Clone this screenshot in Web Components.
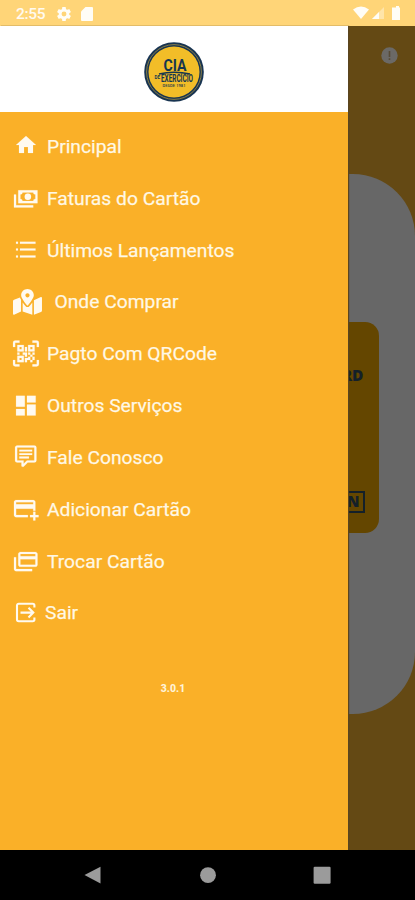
<!DOCTYPE html>
<html lang="pt-BR">
<head>
<meta charset="utf-8">
<title>CIA do Exercício</title>
<style>
html,body{margin:0;padding:0}
body{width:415px;height:900px;overflow:hidden;background:#000;font-family:Roboto,"Noto Sans",sans-serif}
</style>
</head>
<body>
<app-shell></app-shell>
<script>
const define = (name, html) => customElements.define(name, class extends HTMLElement {
  constructor() {
    super();
    const t = document.createElement('template');
    t.innerHTML = html;
    this.attachShadow({mode: 'open'}).append(t.content.cloneNode(true));
  }
});

define('status-bar', `
<style>
:host{display:flex;align-items:center;height:26px;box-sizing:border-box;background:#ffd578;color:#fffaf0;padding:1px 15px 0 16px;font-size:15.5px;font-weight:500}
svg{display:block;fill:#fffdf6}
.time{width:41px;letter-spacing:-.35px;padding-top:1px}
.left{display:flex;gap:10px;flex:1}
.right{display:flex;align-items:center}
</style>
<span class="time">2:55</span>
<div class="left">
<svg width="14" height="14" viewBox="2 2 20 20"><path fill-rule="evenodd" d="M19.43 12.98c.04-.32.07-.64.07-.98s-.03-.66-.07-.98l2.11-1.65c.19-.15.24-.42.12-.64l-2-3.46c-.12-.22-.39-.3-.61-.22l-2.49 1c-.52-.4-1.08-.73-1.69-.98l-.38-2.65A.49.49 0 0 0 14 2h-4c-.25 0-.46.18-.49.42l-.38 2.65c-.61.25-1.17.59-1.69.98l-2.49-1c-.23-.09-.49 0-.61.22l-2 3.46c-.13.22-.07.49.12.64l2.11 1.65c-.04.32-.07.65-.07.98s.03.66.07.98l-2.11 1.65c-.19.15-.24.42-.12.64l2 3.46c.12.22.39.3.61.22l2.49-1c.52.4 1.08.73 1.69.98l.38 2.65c.03.24.24.42.49.42h4c.25 0 .46-.18.49-.42l.38-2.65c.61-.25 1.17-.59 1.69-.98l2.49 1c.23.09.49 0 .61-.22l2-3.46c.12-.22.07-.49-.12-.64l-2.11-1.65zM12 15.5a3.5 3.5 0 1 1 0-7 3.5 3.5 0 0 1 0 7z"/></svg>
<svg width="12" height="14" viewBox="0 0 12 14"><path d="M4.500 0H11a1 1 0 0 1 1 1v12a1 1 0 0 1-1 1H1a1 1 0 0 1-1-1V4.500z"/></svg>
</div>
<div class="right">
<svg width="47" height="15" viewBox="0 0 47 15"><path d="M0 3.500Q8-2.500 16 3.500L8 13z"/><path opacity=".4" d="M31 1v12H19z"/><path d="M26 6v7h-7z"/><path d="M41 1.500h2V0h3v1.500h1.500V14H39V1.500z"/></svg>
</div>`);

define('brand-logo', `
<style>:host{display:block;width:60px;height:60px}svg{display:block;overflow:visible}text{font-family:Roboto,sans-serif;fill:#16364f}</style>
<svg width="60" height="60" viewBox="0 0 60 60">
<circle cx="30" cy="30" r="29.800" fill="#183451"/><circle cx="30" cy="30" r="27.400" fill="none" stroke="#a69246" stroke-width=".8"/><circle cx="30" cy="30" r="25.500" fill="#f2bd28"/>
<text transform="translate(19.500 29) scale(1 1.350)" font-size="12.800" font-weight="700" textLength="23" lengthAdjust="spacingAndGlyphs">CIA</text>
<path d="M15 32Q30 28.500 46 32" fill="none" stroke="#16364f" stroke-width="1.300"/>
<text x="10.500" y="36.500" font-size="4.500" font-weight="700">DE</text>
<text x="17" y="39.700" font-size="10.500" font-weight="700" textLength="32" lengthAdjust="spacingAndGlyphs">EXERCÍCIO</text>
<text x="18.500" y="45" font-size="4" font-weight="500" textLength="23">DESDE 1981</text>
</svg>`);

const mdi = (x, y, s, d) => `<path fill-rule="evenodd" transform="translate(${x} ${y}) scale(${s})" d="${d}"/>`;
const icons = {
  home: mdi(3, 2, 1, 'M10 20v-6h4v6h5v-8h3L12 3 2 12h3v8z'),
  cash: mdi(1.9, .9, 1.07, 'M5,6H23V18H5V6M14,9A3,3 0 0,1 17,12A3,3 0 0,1 14,15A3,3 0 0,1 11,12A3,3 0 0,1 14,9M9,8A2,2 0 0,1 7,10V14A2,2 0 0,1 9,16H19A2,2 0 0,1 21,14V10A2,2 0 0,1 19,8H9M1,10H3V20H19V22H1V10Z'),
  list: '<path d="M5 6.700h2v2H5zm4 0h15.500v2H9zM5 13.600h2v2H5zm4 0h15.500v2H9zM5 20.500h2v2H5zm4 0h15.500v2H9z"/>',
  map: mdi(2, 2, .0503, 'M288 0c-69.59 0-126 56.41-126 126 0 56.26 82.35 158.8 113.9 196.02 6.39 7.54 17.82 7.54 24.2 0C331.65 284.8 414 182.26 414 126 414 56.41 357.59 0 288 0zm0 168c-23.2 0-42-18.8-42-42s18.8-42 42-42 42 18.8 42 42-18.8 42-42 42zM20.12 215.95A32.006 32.006 0 0 0 0 245.66v250.32c0 11.32 11.43 19.06 21.94 14.86L160 448V214.92c-8.84-15.98-16.07-31.54-21.25-46.42L20.12 215.95zM288 359.67c-14.07 0-27.38-6.18-36.51-16.96-19.66-23.2-40.57-49.62-59.49-76.72v182l192 64V266c-18.92 27.09-39.82 53.52-59.49 76.72-9.13 10.77-22.44 16.95-36.51 16.95zm266.06-198.51L416 224v288l139.88-55.95A31.996 31.996 0 0 0 576 426.34V176.02c0-11.32-11.43-19.06-21.94-14.86z'),
  qr: mdi(2, 1.6, 1.08, 'M4,4H10V10H4V4M20,4V10H14V4H20M14,15H16V13H14V11H16V13H18V11H20V13H18V15H20V18H18V20H16V18H13V20H11V16H14V15M16,15V18H18V15H16M4,20V14H10V20H4M6,6V8H8V6H6M16,6V8H18V6H16M6,16V18H8V16H6M4,11H6V13H4V11M9,11H13V15H11V13H9V11M11,6H13V10H11V6M2,2V6H0V2A2,2 0 0,1 2,0H6V2H2M22,0A2,2 0 0,1 24,2V6H22V2H18V0H22M2,18V22H6V24H2A2,2 0 0,1 0,22V18H2M22,22V18H24V22A2,2 0 0,1 22,24H18V22H22Z'),
  dash: mdi(1.8, 1.6, 1.09, 'M3 13h8V3H3v10zm0 8h8v-6H3v6zm10 0h8V11h-8v10zm0-18v6h8V3h-8z'),
  chat: mdi(1.9, 1.3, 1.07, 'M9,22A1,1 0 0,1 8,21V18H4A2,2 0 0,1 2,16V4C2,2.89 2.9,2 4,2H20A2,2 0 0,1 22,4V16A2,2 0 0,1 20,18H13.9L10.2,21.71C10,21.9 9.75,22 9.5,22V22H9M10,16V19.08L13.08,16H20V4H4V16H10M6,6H18V7.700H6V6M6,9.200H18V10.900H6V9.200M6,12.400H15V14.100H6V12.400Z'),
  add: mdi(1.9, 1.8, 1.07, 'M21 18H24V20H21V23H19V20H16V18H19V15H21V18M19 8V6H3V8H19M19 12H3V18H14V20H3C1.89 20 1 19.1 1 18V6C1 4.89 1.89 4 3 4H19C20.1 4 21 4.89 21 6V14H19V12Z'),
  cards: mdi(1.9, 1.6, 1.07, 'M21 8V6H7V8H21M21 16V11H7V16H21M21 4C22.11 4 23 4.9 23 6V16C23 17.11 22.11 18 21 18H7C5.89 18 5 17.1 5 16V6C5 4.89 5.9 4 7 4H21M3 20H18V22H3C1.89 22 1 21.1 1 20V9H3V20Z'),
  exit: '<path d="M23.400 9.500V7.500a1.700 1.700 0 0 0-1.700-1.700H7.700A1.700 1.700 0 0 0 6 7.500v14.100a1.700 1.700 0 0 0 1.700 1.700h14a1.700 1.700 0 0 0 1.700-1.700v-2M9.500 14.600h12.500M17.500 9.800l4.800 4.800-4.800 4.800" fill="none" stroke="#fffaf0" stroke-width="2.100"/>'
};

customElements.define('menu-item', class extends HTMLElement {
  connectedCallback() {
    this.attachShadow({mode: 'open'}).innerHTML = `
<style>
:host{display:flex;align-items:center;height:51.85px;padding-left:11px;color:#fff9ea;font-size:19.25px;line-height:24px}
svg{display:block;overflow:visible;fill:#fffaf0;stroke:#fffaf0;stroke-width:.15;flex:none}
span{white-space:nowrap;margin-left:var(--gap,6px);padding-top:1px;-webkit-text-stroke:.25px #fff4d8}
</style>
<svg width="30" height="30" viewBox="0 0 30 30">${icons[this.getAttribute('icon')]}</svg><span><slot></slot></span>`;
  }
});

define('side-drawer', `
<style>
:host{display:flex;flex-direction:column;width:348px;background:#fab028}
header{height:86px;background:#fff;display:flex;justify-content:center;align-items:center;box-sizing:border-box;padding-top:5px}
nav{padding-top:8.400px}
footer{text-align:center;padding:43.500px 2px 0 0;font-size:10.500px;line-height:14px;font-weight:800;color:#fff3d8}
</style>
<header><brand-logo></brand-logo></header>
<nav><slot></slot></nav>
<footer><slot name="version"></slot></footer>`);

define('home-backdrop', `
<style>
:host{display:flex;flex-direction:column;background:#644914;overflow:hidden}
.top{height:148px;box-sizing:border-box;display:flex;justify-content:flex-end;padding:21px 17px 0 0}
.panel{height:539.500px;box-sizing:border-box;background:#676767;border-radius:62px;padding:147.500px 36.500px 0}
.card{height:211px;box-sizing:border-box;border-radius:14px;background:#644600;color:#142029;display:flex;flex-direction:column;justify-content:space-between;align-items:flex-end;padding:43px 14px 20px 0;font:800 15.500px/20px "Open Sans",sans-serif}
.tag{box-sizing:border-box;border:2.500px solid #142029;padding:0 3px;line-height:17px;height:22px;font-size:15px}
.rd{padding-right:1px}
</style>
<div class="top"><svg width="17" height="17" viewBox="0 0 17 17"><circle cx="8.500" cy="8.500" r="8.200" fill="#6b6966"/><path d="M7.700 4h1.600v6H7.700zm0 7.300h1.600v1.700H7.700z" fill="#574b37"/></svg></div>
<div class="panel"><div class="card"><span class="rd">CARD</span><span class="tag">N</span></div></div>`);

define('nav-bar', `
<style>:host{display:flex;align-items:center;height:50px;background:#000;padding-left:84px}svg{display:block}</style>
<svg width="250" height="20" viewBox="0 0 250 20" fill="#9b9b9b"><path d="M.5 10 16.500 1.800v16.800z"/><circle cx="124" cy="10.200" r="7.900"/><rect x="229.600" y="1.800" width="17" height="17" rx="1.200"/></svg>`);

define('app-shell', `
<style>
:host{display:flex;flex-direction:column;width:415px;height:900px}
main{height:824px;display:grid;grid-template:100%/100%}
main>*{grid-area:1/1}
side-drawer{justify-self:start;box-shadow:1px 0 1px #5a4520}
</style>
<status-bar></status-bar>
<main>
<home-backdrop></home-backdrop>
<side-drawer>
<menu-item icon="home">Principal</menu-item>
<menu-item icon="cash">Faturas do Cartão</menu-item>
<menu-item icon="list">Últimos Lançamentos</menu-item>
<menu-item icon="map" style="--gap:13.500px">Onde Comprar</menu-item>
<menu-item icon="qr">Pagto Com QRCode</menu-item>
<menu-item icon="dash">Outros Serviços</menu-item>
<menu-item icon="chat">Fale Conosco</menu-item>
<menu-item icon="add">Adicionar Cartão</menu-item>
<menu-item icon="cards">Trocar Cartão</menu-item>
<menu-item icon="exit" style="--gap:4px">Sair</menu-item>
<span slot="version">3.0.1</span>
</side-drawer>
</main>
<nav-bar></nav-bar>`);
</script>
</body>
</html>
